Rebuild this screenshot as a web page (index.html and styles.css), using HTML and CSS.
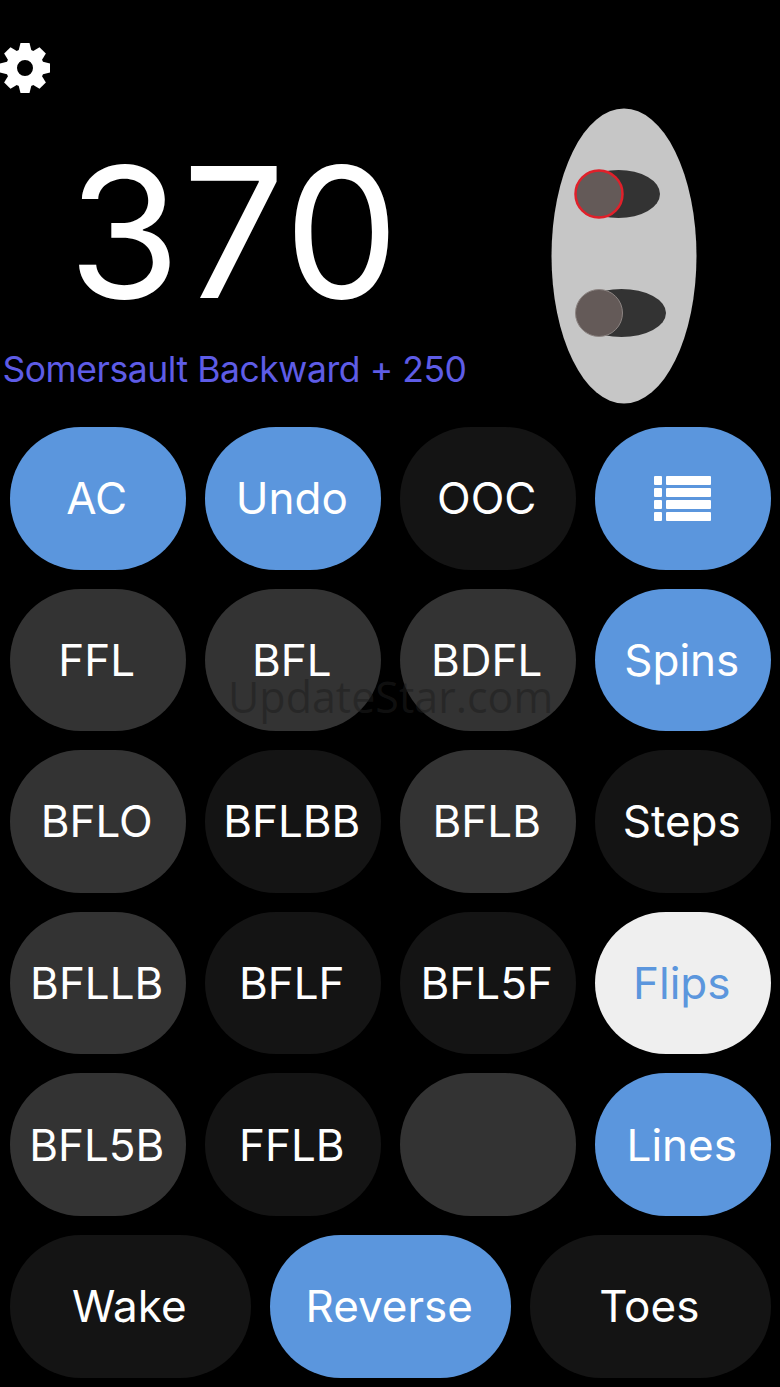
FILE: index.html
```html
<!DOCTYPE html>
<html lang="en">
<head>
    <meta charset="utf-8">
    <title>Trick Score</title>
    <link rel="stylesheet" href="styles.css">
</head>
<body>

    <div class="top">
        <svg class="gear" width="50" height="50" viewBox="-25 -25 50 50">
            <defs>
                <polygon id="tooth" points="-6.5,-17 -4.5,-25 4.5,-25 6.5,-17"/>
            </defs>
            <use href="#tooth"/>
            <use href="#tooth" transform="rotate(45)"/>
            <use href="#tooth" transform="rotate(90)"/>
            <use href="#tooth" transform="rotate(135)"/>
            <use href="#tooth" transform="rotate(180)"/>
            <use href="#tooth" transform="rotate(225)"/>
            <use href="#tooth" transform="rotate(270)"/>
            <use href="#tooth" transform="rotate(315)"/>
            <path fill-rule="evenodd" d="M0,-19A19,19 0 1 1 0,19A19,19 0 1 1 0,-19ZM0,-8A8,8 0 1 0 0,8A8,8 0 1 0 0,-8Z"/>
        </svg>

        <div class="scoreRow">
            <div class="scoreBox">
                <div class="score">370</div>
                <div class="lastTrick">Somersault Backward + 250</div>
            </div>
            <svg class="skiFigure" width="146" height="296" viewBox="0 0 146 296">
                <ellipse class="ski" cx="73" cy="148" rx="72.5" ry="147.5"/>
                <ellipse class="binding" cx="67.5" cy="86" rx="41.5" ry="24"/>
                <ellipse class="binding" cx="70.5" cy="205" rx="44.5" ry="24"/>
                <circle class="foot footActive" cx="48" cy="86" r="23.5"/>
                <circle class="foot" cx="48" cy="205" r="23.5"/>
            </svg>
        </div>
    </div>

    <div class="pad">
        <button class="key blue">AC</button>
        <button class="key blue">Undo</button>
        <button class="key dim">OOC</button>
        <button class="key blue" aria-label="List">
            <svg class="listIcon" width="57" height="45" viewBox="0 0 57 45">
                <rect x="0" y="0" width="8" height="9" rx="1"/><rect x="12" y="0" width="45" height="9" rx="1"/>
                <rect x="0" y="12" width="8" height="9" rx="1"/><rect x="12" y="12" width="45" height="9" rx="1"/>
                <rect x="0" y="24" width="8" height="9" rx="1"/><rect x="12" y="24" width="45" height="9" rx="1"/>
                <rect x="0" y="36" width="8" height="9" rx="1"/><rect x="12" y="36" width="45" height="9" rx="1"/>
            </svg>
        </button>

        <button class="key">FFL</button>
        <button class="key">BFL</button>
        <button class="key">BDFL</button>
        <button class="key blue">Spins</button>

        <button class="key">BFLO</button>
        <button class="key dim">BFLBB</button>
        <button class="key">BFLB</button>
        <button class="key dim">Steps</button>

        <button class="key">BFLLB</button>
        <button class="key dim">BFLF</button>
        <button class="key dim">BFL5F</button>
        <button class="key light">Flips</button>

        <button class="key">BFL5B</button>
        <button class="key dim">FFLB</button>
        <button class="key"></button>
        <button class="key blue">Lines</button>
    </div>

    <div class="pad padBottom">
        <button class="key dim">Wake</button>
        <button class="key blue">Reverse</button>
        <button class="key dim">Toes</button>
    </div>

    <div class="watermark">UpdateStar.com</div>

</body>
</html>
```

FILE: styles.css
```css
* {
    margin: 0;
    padding: 0;
    box-sizing: border-box;
    font-family: "Inter", "Liberation Sans", sans-serif;
}

body {
    position: relative;
    width: 780px;
    height: 1387px;
    background: black;
    color: white;
    overflow: hidden;
}

.top {
    height: 427px;
    padding-top: 43px;
}

.gear {
    display: block;
    fill: white;
}

.scoreRow {
    display: flex;
    align-items: flex-start;
    margin-top: 15px;
}

.scoreBox {
    width: 469px;
    text-align: center;
}

.score {
    margin-top: 14px;
    font-size: 182px;
    font-weight: 400;
    line-height: 220px;
    letter-spacing: 0.01em;
}

.lastTrick {
    margin-top: 8px;
    font-size: 35.5px;
    line-height: 40px;
    letter-spacing: -0.44px;
    color: #5e5ce6;
    white-space: nowrap;
}

.skiFigure {
    margin-left: 82px;
}

.ski {
    fill: #c6c6c6;
}

.binding {
    fill: #333;
}

.foot {
    fill: #645a58;
    stroke: #8c8482;
    stroke-width: 1;
}

.footActive {
    stroke: #e0202a;
    stroke-width: 2.5;
}

.pad {
    display: grid;
    grid-template-columns: repeat(4, 175.5px);
    grid-auto-rows: 142.6px;
    gap: 19px 19.5px;
    padding-left: 10px;
}

.padBottom {
    grid-template-columns: repeat(3, 240.5px);
    margin-top: 19px;
}

.key {
    display: flex;
    align-items: center;
    justify-content: center;
    padding-right: 2px;
    border: none;
    border-radius: 71px;
    background: #333;
    color: white;
    font-size: 44px;
    font-weight: 400;
}

.dim {
    background: #141414;
}

.blue {
    background: #5b96dd;
}

.light {
    background: #efefef;
    color: #5b96dd;
}

.listIcon {
    margin-left: 2px;
    fill: white;
}

.watermark {
    position: absolute;
    top: 669px;
    left: 228px;
    font-family: "Open Sans", sans-serif;
    font-size: 43px;
    line-height: 56px;
    color: rgba(30, 30, 30, 0.55);
}
```
